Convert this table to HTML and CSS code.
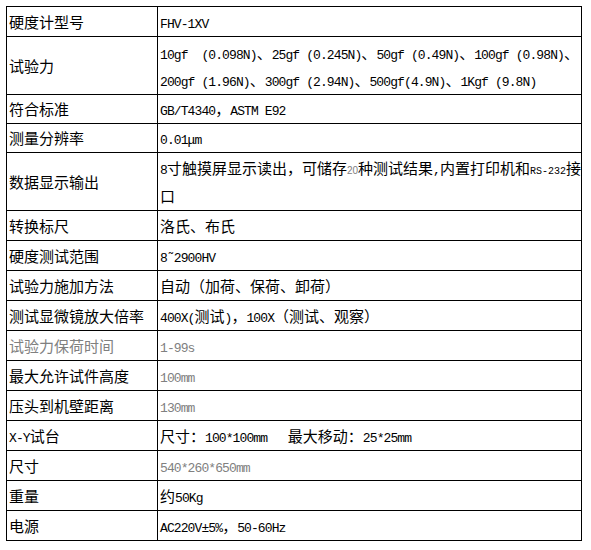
FILE: index.html
```html
<!DOCTYPE html>
<html lang="zh-CN">
<head>
<meta charset="utf-8">
<title>规格参数</title>
<link rel="stylesheet" href="styles.css">
</head>
<body>
<table class="spec">
  <colgroup><col class="c-key"><col class="c-val"></colgroup>
  <tbody>
    <tr class="r30"><td>硬度计型号</td><td><span class="en">FHV-1XV</span></td></tr>
    <tr class="r58"><td>试验力</td><td><span class="en">10gf&nbsp;&nbsp;(0.098N)</span>、<span class="en">25gf (0.245N)</span>、<span class="en">50gf (0.49N)</span>、<span class="en">100gf (0.98N)</span>、<br><span class="en">200gf (1.96N)</span>、<span class="en">300gf (2.94N)</span>、<span class="en">500gf(4.9N)</span>、<span class="en">1Kgf (9.8N)</span></td></tr>
    <tr class="r29"><td>符合标准</td><td><span class="en">GB/T4340</span>，<span class="en">ASTM E92</span></td></tr>
    <tr class="r29"><td>测量分辨率</td><td><span class="en">0.01μm</span></td></tr>
    <tr class="r58 wide-lines"><td>数据显示输出</td><td><span class="en">8</span>寸触摸屏显示读出，可储存<span class="small-grey">20</span>种测试结果<span class="en">,</span>内置打印机和<span class="small-mono">RS-232</span>接<br>口</td></tr>
    <tr class="r30"><td>转换标尺</td><td>洛氏、布氏</td></tr>
    <tr class="r30"><td>硬度测试范围</td><td><span class="en">8˜2900HV</span></td></tr>
    <tr class="r30"><td>试验力施加方法</td><td>自动（加荷、保荷、卸荷）</td></tr>
    <tr class="r30"><td>测试显微镜放大倍率</td><td><span class="en">400X(</span>测试<span class="en">)</span>，<span class="en">100X</span>（测试、观察）</td></tr>
    <tr class="r30 grey"><td>试验力保荷时间</td><td><span class="en">1-99s</span></td></tr>
    <tr class="r30"><td>最大允许试件高度</td><td class="grey"><span class="en">100mm</span></td></tr>
    <tr class="r30"><td>压头到机壁距离</td><td class="grey"><span class="en">130mm</span></td></tr>
    <tr class="r30"><td><span class="en">X-Y</span>试台</td><td>尺寸：<span class="en">100*100mm&nbsp;&nbsp;&nbsp;</span>最大移动：<span class="en">25*25mm</span></td></tr>
    <tr class="r30"><td>尺寸</td><td class="grey"><span class="en">540*260*650mm</span></td></tr>
    <tr class="r30"><td>重量</td><td>约<span class="en">50Kg</span></td></tr>
    <tr class="r30"><td>电源</td><td><span class="en">AC220V±5%</span>，<span class="en">50-60Hz</span></td></tr>
  </tbody>
</table>
</body>
</html>
```
FILE: styles.css
```css
html, body {
  margin: 0;
  padding: 0;
  background: #ffffff;
}

body {
  padding: 6px 0 0 6px;
  font-family: "Noto Sans CJK SC", "Noto Sans", sans-serif;
  font-size: 15px;
  color: #000000;
}

.spec {
  border-collapse: collapse;
  table-layout: fixed;
  width: 575px;
}

.c-key { width: 151px; }
.c-val { width: 424px; }

.spec td {
  border: 1px solid #000000;
  padding: 0 2px;
  line-height: 26px;
  vertical-align: middle;
  white-space: nowrap;
  overflow: hidden;
  box-sizing: border-box;
}

.r30 td { height: 30px; }
.r29 td { height: 29px; }
.r58 td { height: 58px; line-height: 27px; }
.r58.wide-lines td { line-height: 28px; }

.en,
.small-grey,
.small-mono {
  line-height: 1;
}

.en {
  font-family: "Liberation Mono", monospace;
  font-size: 13px;
  letter-spacing: -0.9px;
}

.small-grey {
  font-family: "Liberation Sans", sans-serif;
  font-size: 10px;
  color: #808080;
}

.small-mono {
  font-family: "Liberation Mono", monospace;
  font-size: 10px;
}

.grey,
.grey td {
  color: #808080;
}
```
